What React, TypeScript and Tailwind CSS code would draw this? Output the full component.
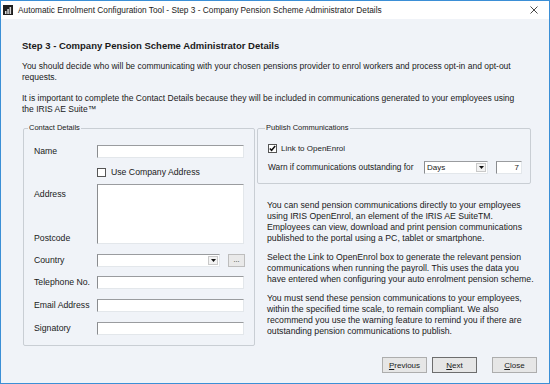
import React from 'react';

const inputBox =
  'h-[13px] bg-white border border-[#e3e7eb] border-t-[#9a9c9f] border-l-[#8a8c8f]';

const Checkbox: React.FC<{ checked?: boolean }> = ({ checked }) => (
  <div className="w-[9px] h-[9px] bg-white border border-[#555] flex items-center justify-center">
    {checked && (
      <svg width="7" height="7" viewBox="0 0 7 7">
        <path d="M0.8 3.4 L2.6 5.3 L6.2 1" stroke="#111" strokeWidth="1.5" fill="none" />
      </svg>
    )}
  </div>
);

const DropArrow: React.FC = () => (
  <div className="w-[10px] h-[9px] bg-[#f3f3f3] border border-[#c9c9c9] flex items-center justify-center mr-[1px]">
    <svg width="5" height="3" viewBox="0 0 5 3">
      <path d="M0 0 H5 L2.5 3 Z" fill="#111" />
    </svg>
  </div>
);

const Field: React.FC<{ label: string; className?: string }> = ({ label, className }) => (
  <div className={`flex items-center ${className ?? ''}`}>
    <span className="w-[63px] shrink-0">{label}</span>
    <div className={`${inputBox} w-[147px]`} />
  </div>
);

const Btn: React.FC<{ mn: string; rest: string; primary?: boolean }> = ({ mn, rest, primary }) => (
  <button
    className={`w-[45px] h-[16px] flex items-center justify-center text-[8px] bg-[#e6e6e6] border ${
      primary ? 'border-[#6d6d6d]' : 'border-[#adadad]'
    }`}
  >
    <span>
      <span className="underline">{mn}</span>
      {rest}
    </span>
  </button>
);

const Lines: React.FC<{ lines: string[] }> = ({ lines }) => (
  <p className="whitespace-nowrap">
    {lines.map((l, i) => (
      <React.Fragment key={i}>
        {l}
        {i < lines.length - 1 && <br />}
      </React.Fragment>
    ))}
  </p>
);

const App: React.FC = () => {
  return (
    <div className="w-[550px] h-[384px] border border-[#3b8fd6] bg-[#f0f3f8] flex flex-col overflow-hidden text-[#1a1a1a] font-['Liberation_Sans',Arial,sans-serif]">
      {/* title bar */}
      <div className="h-[18px] bg-white flex items-center pl-[2px] pr-[11px] shrink-0">
        <svg width="10" height="10" viewBox="0 0 10 10" className="mr-[5px]">
          <rect width="10" height="10" fill="#1f1f1f" />
          <rect x="2" y="6" width="1.5" height="3" fill="#d8d8d8" />
          <rect x="4.3" y="4" width="1.5" height="5" fill="#d8d8d8" />
          <rect x="6.6" y="2" width="1.5" height="7" fill="#d8d8d8" />
        </svg>
        <span className="text-[8.3px] text-[#222]">
          Automatic Enrolment Configuration Tool - Step 3 - Company Pension Scheme Administrator Details
        </span>
        <svg width="8" height="8" viewBox="0 0 8 8" className="ml-auto">
          <path d="M0.5 0.5 L7.5 7.5 M7.5 0.5 L0.5 7.5" stroke="#333" strokeWidth="0.9" />
        </svg>
      </div>

      {/* content */}
      <div className="flex-1 flex flex-col pl-[21px] text-[8.5px] leading-[11px]">
        <h1 className="mt-[21px] font-bold text-[9.5px] leading-[12px]">
          Step 3 - Company Pension Scheme Administrator Details
        </h1>
        <div className="mt-[9px]">
          <Lines
            lines={[
              'You should decide who will be communicating with your chosen pensions provider to enrol workers and process opt-in and opt-out',
              'requests.',
            ]}
          />
        </div>
        <div className="mt-[10px]">
          <Lines
            lines={[
              'It is important to complete the Contact Details because they will be included in communications generated to your employees using',
              'the IRIS AE Suite™',
            ]}
          />
        </div>

        <div className="flex mt-[8px] ml-[1px] gap-[2px]">
          {/* Contact details */}
          <fieldset className="w-[232px] h-[223px] border border-[#c9ced4] rounded-[2px] pl-[10px] pr-[9px] text-[8.7px]">
            <legend className="-ml-[6px] px-[1px] text-[7.5px] leading-[10px]">Contact Details</legend>
            <Field label="Name" className="mt-[12px]" />
            <div className="flex items-center mt-[10px] ml-[63px] h-[9px]">
              <Checkbox />
              <span className="ml-[5px]">Use Company Address</span>
            </div>
            <div className="flex mt-[7px]">
              <div className="w-[63px] shrink-0 flex flex-col justify-between pt-[5px] pb-0">
                <span>Address</span>
                <span>Postcode</span>
              </div>
              <div className={`${inputBox} w-[147px] h-[60px]`} />
            </div>
            <div className="flex items-center mt-[10px]">
              <span className="w-[63px] shrink-0">Country</span>
              <div className={`${inputBox} w-[123px] flex items-center justify-end`}>
                <DropArrow />
              </div>
              <div className="ml-[8px] w-[17px] h-[13px] bg-[#e9e9e9] border border-[#bdbdbd] flex items-center justify-center text-[7px] leading-none pb-[3px]">
                ...
              </div>
            </div>
            <Field label="Telephone No." className="mt-[9px]" />
            <Field label="Email Address" className="mt-[10px]" />
            <Field label="Signatory" className="mt-[10px]" />
          </fieldset>

          {/* right column */}
          <div className="w-[274px] flex flex-col">
            <fieldset className="h-[61px] border border-[#c9ced4] rounded-[2px] pl-[10px]">
              <legend className="-ml-[3px] px-[1px] text-[7.5px] leading-[10px]">Publish Communications</legend>
              <div className="flex items-center mt-[11px] h-[9px]">
                <Checkbox checked />
                <span className="ml-[4px] text-[8px]">Link to OpenEnrol</span>
              </div>
              <div className="flex items-center mt-[8px]">
                <span className="w-[156px] shrink-0 text-[8.3px]">Warn if communications outstanding for</span>
                <div className={`${inputBox} w-[64px] flex items-center justify-between pl-[2px]`}>
                  <span className="text-[8px]">Days</span>
                  <DropArrow />
                </div>
                <div className={`${inputBox} ml-[8px] w-[26px] flex items-center justify-end pr-[2px]`}>
                  <span className="text-[8px]">7</span>
                </div>
              </div>
            </fieldset>
            <div className="pl-[10px] mt-[16px] flex flex-col gap-[8px] text-[8.7px]">
              <Lines
                lines={[
                  'You can send pension communications directly to your employees',
                  'using IRIS OpenEnrol, an element of the IRIS AE SuiteTM.',
                  'Employees can view, download and print pension communications',
                  'published to the portal using a PC, tablet or smartphone.',
                ]}
              />
              <Lines
                lines={[
                  'Select the Link to OpenEnrol box to generate the relevant pension',
                  'communications when running the payroll. This uses the data you',
                  'have entered when configuring your auto enrolment pension scheme.',
                ]}
              />
              <Lines
                lines={[
                  'You must send these pension communications to your employees,',
                  'within the specified time scale, to remain compliant. We also',
                  'recommend you use the warning feature to remind you if there are',
                  'outstanding pension communications to publish.',
                ]}
              />
            </div>
          </div>
        </div>

        {/* buttons */}
        <div className="mt-auto mb-[10px] mr-[12px] flex justify-end">
          <Btn mn="P" rest="revious" />
          <div className="ml-[5px]">
            <Btn mn="N" rest="ext" primary />
          </div>
          <div className="ml-[15px]">
            <Btn mn="C" rest="lose" />
          </div>
        </div>
      </div>
    </div>
  );
};

export default App;
